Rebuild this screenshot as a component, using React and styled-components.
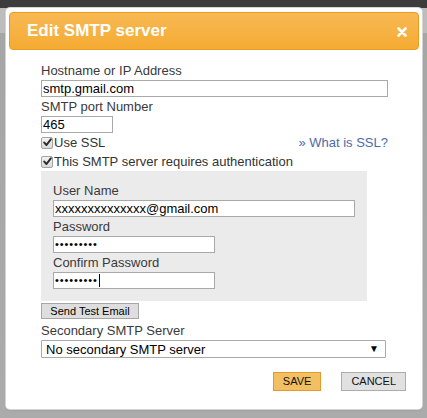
import React from "react";
import styled, { createGlobalStyle } from "styled-components";

const GlobalStyle = createGlobalStyle`
  html, body {
    margin: 0;
    padding: 0;
    background: #a9a9a9;
  }
  body {
    font-family: "Liberation Sans", Arial, sans-serif;
    font-size: 13px;
    color: #333;
  }
`;

const App = () => {
  return (
    <Page>
      <GlobalStyle />
      <TopStrip />
      <Stage>
        <Dialog>
          <Header>
            <Title>Edit SMTP server</Title>
            <Close aria-label="close">
              <svg width="10" height="10" viewBox="0 0 10 10">
                <path d="M1.5 1.5 L8.5 8.5 M8.5 1.5 L1.5 8.5" stroke="#fff" strokeWidth="2.6" strokeLinecap="round" />
              </svg>
            </Close>
          </Header>

          <Form>
            <Label>Hostname or IP Address</Label>
            <Field $w={347}>smtp.gmail.com</Field>
            <Label>SMTP port Number</Label>
            <Field $w={72}>465</Field>

            <CheckRow>
              <CheckLabel>
                <Check />
                Use SSL
              </CheckLabel>
              <HelpLink href="#">» What is SSL?</HelpLink>
            </CheckRow>
            <CheckRow>
              <CheckLabel>
                <Check />
                This SMTP server requires authentication
              </CheckLabel>
            </CheckRow>

            <AuthBox>
              <Label>User Name</Label>
              <Field $w={302}>xxxxxxxxxxxxxx@gmail.com</Field>
              <Label>Password</Label>
              <Field $w={162}>
                <Dots>•••••••••</Dots>
              </Field>
              <Label>Confirm Password</Label>
              <Field $w={162}>
                <Dots>•••••••••</Dots>
                <Caret />
              </Field>
            </AuthBox>

            <TestButton>Send Test Email</TestButton>

            <Label $top={2}>Secondary SMTP Server</Label>
            <SelectBox>
              <span>No secondary SMTP server</span>
              <Arrow>▼</Arrow>
            </SelectBox>
          </Form>

          <Footer>
            <ActionButton $primary>SAVE</ActionButton>
            <ActionButton>CANCEL</ActionButton>
          </Footer>
        </Dialog>
      </Stage>
    </Page>
  );
};

const Check = () => (
  <Box>
    <svg width="9" height="9" viewBox="0 0 9 9">
      <path d="M1.3 4.6 L3.5 7 L7.8 1.4" fill="none" stroke="#2b2b2b" strokeWidth="2" strokeLinecap="round" strokeLinejoin="round" />
    </svg>
  </Box>
);

const Page = styled.div`
  width: 427px;
  height: 418px;
  display: flex;
  flex-direction: column;
  overflow: hidden;
  background: #a9a9a9;
`;

const TopStrip = styled.div`
  height: 8px;
  flex: none;
  background: #3c3c3c;
`;

const Stage = styled.div`
  flex: 1;
  background: linear-gradient(#bdbdbd 0, #bdbdbd 25px, #a6a6a6 25px, #ababab 100%);
`;

const Dialog = styled.div`
  margin-left: 6px;
  width: 416px;
  box-sizing: border-box;
  padding: 4px 3px 18px;
  background: #fff;
  border-radius: 4px;
  box-shadow: 0 0 0 1px #d4d4d4, 0 1px 2px rgba(0, 0, 0, 0.15);
`;

const Header = styled.div`
  height: 38px;
  box-sizing: border-box;
  display: flex;
  align-items: center;
  justify-content: space-between;
  padding: 0 11px 0 17px;
  border: 1px solid #ea9b20;
  border-radius: 4px;
  background: linear-gradient(#f7b954, #f5ab32);
`;

const Title = styled.h2`
  margin: 0;
  font-size: 17px;
  font-weight: 700;
  color: #fff;
`;

const Close = styled.span`
  display: flex;
  width: 10px;
  height: 10px;
  margin-top: 1px;
`;

const Form = styled.div`
  padding: 11px 0 0 32px;
  width: 347px;
  display: flex;
  flex-direction: column;
  align-items: flex-start;
`;

const Label = styled.div`
  line-height: 19px;
  margin-top: ${(p) => p.$top || 0}px;
  color: #3a3a3a;
  font-size: 13px;
`;

const Field = styled.div`
  width: ${(p) => p.$w}px;
  height: 17px;
  box-sizing: border-box;
  border: 1px solid #a9a9a9;
  background: #fff;
  padding: 0 2px 0 1px;
  display: flex;
  align-items: center;
  font-size: 13px;
  color: #000;
  white-space: nowrap;
  overflow: hidden;
`;

const Dots = styled.span`
  font-size: 11px;
  letter-spacing: 0.9px;
  line-height: 15px;
`;

const Caret = styled.span`
  width: 1px;
  height: 13px;
  margin-left: 1px;
  background: #000;
`;

const CheckRow = styled.div`
  width: 347px;
  height: 19px;
  display: flex;
  align-items: center;
  justify-content: space-between;
`;

const CheckLabel = styled.label`
  display: flex;
  align-items: center;
  color: #333;
  font-size: 13px;
`;

const Box = styled.span`
  width: 12px;
  height: 12px;
  box-sizing: border-box;
  margin-right: 1px;
  border: 1px solid #a3a3a3;
  border-radius: 2px;
  background: linear-gradient(#f4f4f4, #d9d9d9);
  display: flex;
  align-items: center;
  justify-content: center;
`;

const HelpLink = styled.a`
  color: #4e6aa8;
  text-decoration: none;
  font-size: 13px;
`;

const AuthBox = styled.div`
  width: 326px;
  box-sizing: border-box;
  padding: 10px 13px 12px 12px;
  background: #ebebeb;
  display: flex;
  flex-direction: column;
  align-items: flex-start;
`;

const TestButton = styled.button`
  margin-top: 2px;
  width: 98px;
  height: 16px;
  padding: 0;
  border: 1px solid #a6a6a6;
  background: #dedede;
  font-family: "Liberation Sans", Arial, sans-serif;
  font-size: 11px;
  line-height: 14px;
  color: #000;
`;

const SelectBox = styled.div`
  width: 345px;
  height: 18px;
  box-sizing: border-box;
  border: 1px solid #a9a9a9;
  border-radius: 1px;
  background: #fff;
  display: flex;
  align-items: center;
  justify-content: space-between;
  padding: 0 6px 0 4px;
  font-size: 13px;
  color: #000;
`;

const Arrow = styled.span`
  font-size: 10px;
  line-height: 10px;
  color: #000;
`;

const Footer = styled.div`
  display: flex;
  justify-content: flex-end;
  gap: 20px;
  margin-top: 14px;
  padding-right: 13px;
`;

const ActionButton = styled.button`
  height: 19px;
  padding: 0 9px;
  border: 1px solid ${(p) => (p.$primary ? "#e49a2a" : "#acacac")};
  background: ${(p) => (p.$primary ? "#f2c063" : "#e1e1e1")};
  font-family: "Liberation Sans", Arial, sans-serif;
  font-size: 11px;
  line-height: 17px;
  color: #111;
`;

export default App;
